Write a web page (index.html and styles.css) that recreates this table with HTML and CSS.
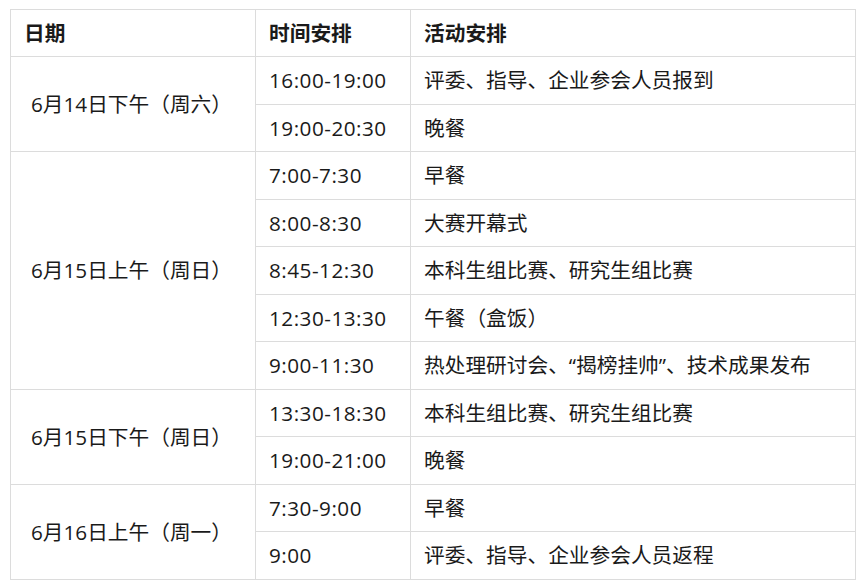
FILE: index.html
```html
<!DOCTYPE html>
<html lang="zh-CN">
<head>
<meta charset="utf-8">
<link rel="stylesheet" href="styles.css">
</head>
<body>
<table class="schedule">
  <colgroup>
    <col class="c-date"><col class="c-time"><col class="c-act">
  </colgroup>
  <thead>
    <tr><th>日期</th><th>时间安排</th><th>活动安排</th></tr>
  </thead>
  <tbody>
    <tr><td class="date" rowspan="2">6月14日下午（周六）</td><td class="time">16:00-19:00</td><td>评委、指导、企业参会人员报到</td></tr>
    <tr><td class="time">19:00-20:30</td><td>晚餐</td></tr>
    <tr><td class="date" rowspan="5">6月15日上午（周日）</td><td class="time">7:00-7:30</td><td>早餐</td></tr>
    <tr><td class="time">8:00-8:30</td><td>大赛开幕式</td></tr>
    <tr><td class="time">8:45-12:30</td><td>本科生组比赛、研究生组比赛</td></tr>
    <tr><td class="time">12:30-13:30</td><td>午餐（盒饭）</td></tr>
    <tr><td class="time">9:00-11:30</td><td>热处理研讨会、“揭榜挂帅”、技术成果发布</td></tr>
    <tr><td class="date" rowspan="2">6月15日下午（周日）</td><td class="time">13:30-18:30</td><td>本科生组比赛、研究生组比赛</td></tr>
    <tr><td class="time">19:00-21:00</td><td>晚餐</td></tr>
    <tr><td class="date" rowspan="2">6月16日上午（周一）</td><td class="time">7:30-9:00</td><td>早餐</td></tr>
    <tr><td class="time">9:00</td><td>评委、指导、企业参会人员返程</td></tr>
  </tbody>
</table>
</body>
</html>
```

FILE: styles.css
```css
html, body {
  margin: 0;
  padding: 0;
  background: #ffffff;
}
body {
  padding: 9px 0 0 10px;
  font-family: "Open Sans", "Noto Sans CJK SC", sans-serif;
  color: #1a1a1a;
}
.schedule {
  border-collapse: collapse;
  table-layout: fixed;
  width: 845px;
  font-size: 20.7px;
}
.c-date { width: 245px; }
.c-time { width: 155px; }
.c-act { width: 445px; }
.schedule th,
.schedule td {
  border: 1px solid #dcdcdc;
  height: 47.5px;
  padding: 0 13px;
  box-sizing: border-box;
  text-align: left;
  vertical-align: middle;
  white-space: nowrap;
  line-height: 24px;
}
.schedule th {
  font-weight: 700;
  height: 47px;
}
.schedule td.date {
  padding-left: 20px;
}
.schedule td.time {
  letter-spacing: 0.5px;
}
```
